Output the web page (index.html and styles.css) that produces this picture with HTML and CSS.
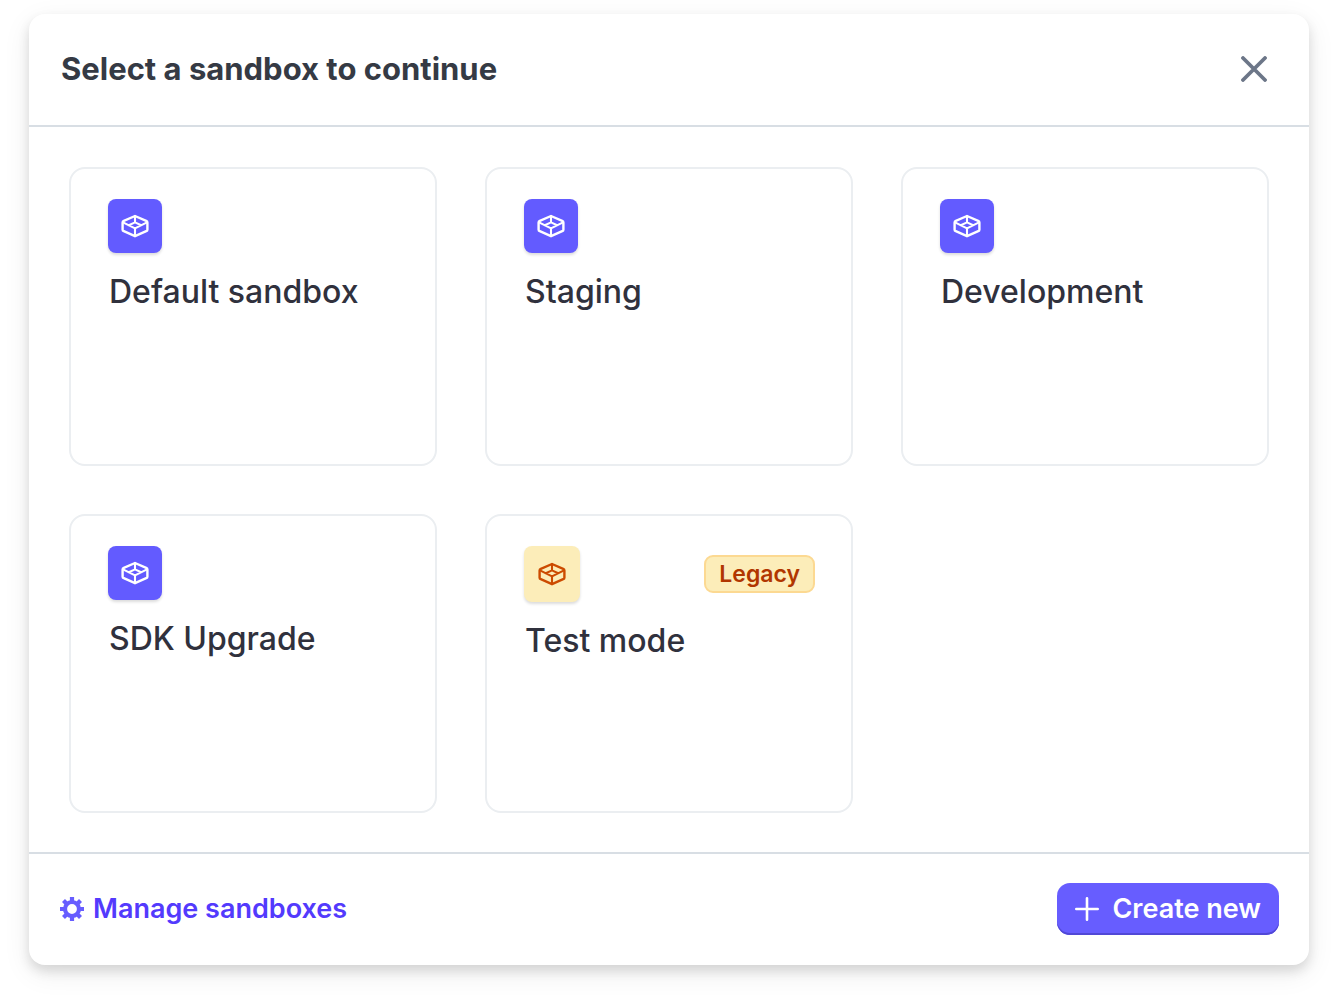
FILE: index.html
```html
<!DOCTYPE html>
<html lang="en">
<head>
<meta charset="utf-8">
<meta name="viewport" content="width=device-width, initial-scale=1">
<title>Select a sandbox</title>
<link rel="stylesheet" href="styles.css">
</head>
<body>
<svg class="sprite" aria-hidden="true">
  <symbol id="sandbox" viewBox="0 0 28 24">
    <g fill="none" stroke="currentColor" stroke-linejoin="round" stroke-linecap="round">
      <path stroke-width="2.4" d="M14 2 25.2 6.8Q26.4 7.3 26.4 8.4V15.7Q26.4 16.8 25.2 17.2L14 22.2 2.8 17.2Q1.6 16.8 1.6 15.7V8.4Q1.6 7.3 2.8 6.8Z"/>
      <path stroke-width="2.1" d="M14 2V8.4M2.5 8.6 14 14.4 25.5 8.6M14 14.4V22M14 8.4 20.2 11.2M14 8.4 7.8 11.2"/>
    </g>
  </symbol>
</svg>
<main class="dialog" role="dialog" aria-labelledby="dialog-title">
  <header class="dialog-header">
    <h1 class="dialog-title" id="dialog-title">Select a sandbox to continue</h1>
    <button class="close" type="button" aria-label="Close">
      <svg width="26" height="26" viewBox="0 0 26 26"><path d="M2 2 24 24M24 2 2 24" fill="none" stroke="currentColor" stroke-width="3.8" stroke-linecap="round"/></svg>
    </button>
  </header>
  <section class="sandboxes">
    <button class="card" type="button">
      <span class="card-top"><span class="tile"><svg class="tile-icon"><use href="#sandbox"/></svg></span></span>
      <span class="card-name">Default sandbox</span>
    </button>
    <button class="card" type="button">
      <span class="card-top"><span class="tile"><svg class="tile-icon"><use href="#sandbox"/></svg></span></span>
      <span class="card-name">Staging</span>
    </button>
    <button class="card" type="button">
      <span class="card-top"><span class="tile"><svg class="tile-icon"><use href="#sandbox"/></svg></span></span>
      <span class="card-name">Development</span>
    </button>
    <button class="card" type="button">
      <span class="card-top"><span class="tile"><svg class="tile-icon"><use href="#sandbox"/></svg></span></span>
      <span class="card-name">SDK Upgrade</span>
    </button>
    <button class="card" type="button">
      <span class="card-top"><span class="tile tile-legacy"><svg class="tile-icon"><use href="#sandbox"/></svg></span><span class="badge">Legacy</span></span>
      <span class="card-name">Test mode</span>
    </button>
  </section>
  <footer class="dialog-footer">
    <a class="manage" href="#manage">
      <svg class="gear" width="24" height="24" viewBox="0 0 24 24"><g fill="none" stroke="currentColor"><circle cx="12" cy="12" r="7" stroke-width="4.2"/><path stroke-width="4.2" d="M12 0V4M12 20V24M0 12H4M20 12H24M3.5 3.5 6.2 6.2M17.8 17.8 20.5 20.5M20.5 3.5 17.8 6.2M6.2 17.8 3.5 20.5"/></g></svg>
      Manage sandboxes
    </a>
    <button class="create" type="button">
      <svg width="24" height="24" viewBox="0 0 24 24"><path d="M12 1.3V22.7M1.3 12H22.7" fill="none" stroke="currentColor" stroke-width="2.6" stroke-linecap="round"/></svg>
      Create new
    </button>
  </footer>
</main>
</body>
</html>
```
FILE: styles.css
```css
* { box-sizing: border-box; }

body {
  margin: 0;
  padding: 14px 27px 40px 29px;
  background: #fff;
  color: #30313d;
  font-family: Inter, "Liberation Sans", sans-serif;
}

button {
  margin: 0;
  border: 0;
  background: none;
  color: inherit;
  font: inherit;
  cursor: pointer;
}

svg { display: block; flex: none; }

.sprite { position: absolute; width: 0; height: 0; }

.dialog {
  border-radius: 16px;
  background: #fff;
  box-shadow: 0 6px 12px rgba(0, 0, 0, 0.12), 0 8px 28px rgba(0, 0, 0, 0.08);
}

.dialog-header {
  display: flex;
  align-items: center;
  justify-content: space-between;
  padding: 31px 34px 32px 32px;
  border-bottom: 2px solid #d8dee4;
}

.dialog-title {
  margin: 0;
  color: #353a44;
  font-size: 31px;
  font-weight: 700;
  line-height: 48px;
}

.close { padding: 8px; color: #6c7688; }

.sandboxes {
  display: grid;
  grid-template-columns: repeat(3, 1fr);
  gap: 48px;
  padding: 40px 40px 39px;
}

.card {
  display: flex;
  flex-direction: column;
  min-height: 299px;
  padding: 30px 36px 30px 37px;
  border: 2px solid #ebeef1;
  border-radius: 16px;
  text-align: left;
}

.card-top {
  display: flex;
  align-items: center;
  justify-content: space-between;
  width: 100%;
}

.tile {
  display: flex;
  align-items: center;
  justify-content: center;
  width: 54px;
  height: 54px;
  border-radius: 8px;
  background: #635bff;
  box-shadow: 0 2px 3px rgba(0, 0, 0, 0.14);
  color: #fff;
}

.tile-legacy {
  width: 56px;
  height: 56px;
  background: #fcedb9;
  color: #cc4b00;
}

.tile-icon { width: 28px; height: 24px; }

.badge {
  padding: 0 13px;
  border: 2px solid #fcd992;
  border-radius: 9px;
  background: #fcedb9;
  color: #b13600;
  font-size: 23px;
  font-weight: 600;
  line-height: 34px;
}

.card-name {
  margin-top: 19px;
  padding-left: 1px;
  font-size: 32px;
  font-weight: 500;
  line-height: 40px;
}

.dialog-footer {
  display: flex;
  align-items: center;
  justify-content: space-between;
  padding: 29px 30px 30px 31px;
  border-top: 2px solid #d8dee4;
}

.manage {
  display: flex;
  align-items: center;
  gap: 9px;
  color: #533afd;
  font-size: 27px;
  font-weight: 600;
  line-height: 40px;
  text-decoration: none;
}

.gear { color: #675dff; }

.create {
  display: flex;
  align-items: center;
  gap: 13px;
  padding: 6px 18px;
  border-radius: 13px;
  background: #675dff;
  box-shadow: inset 0 -2px #5148d6;
  color: #fff;
  font-size: 27px;
  font-weight: 600;
  line-height: 40px;
}
```
